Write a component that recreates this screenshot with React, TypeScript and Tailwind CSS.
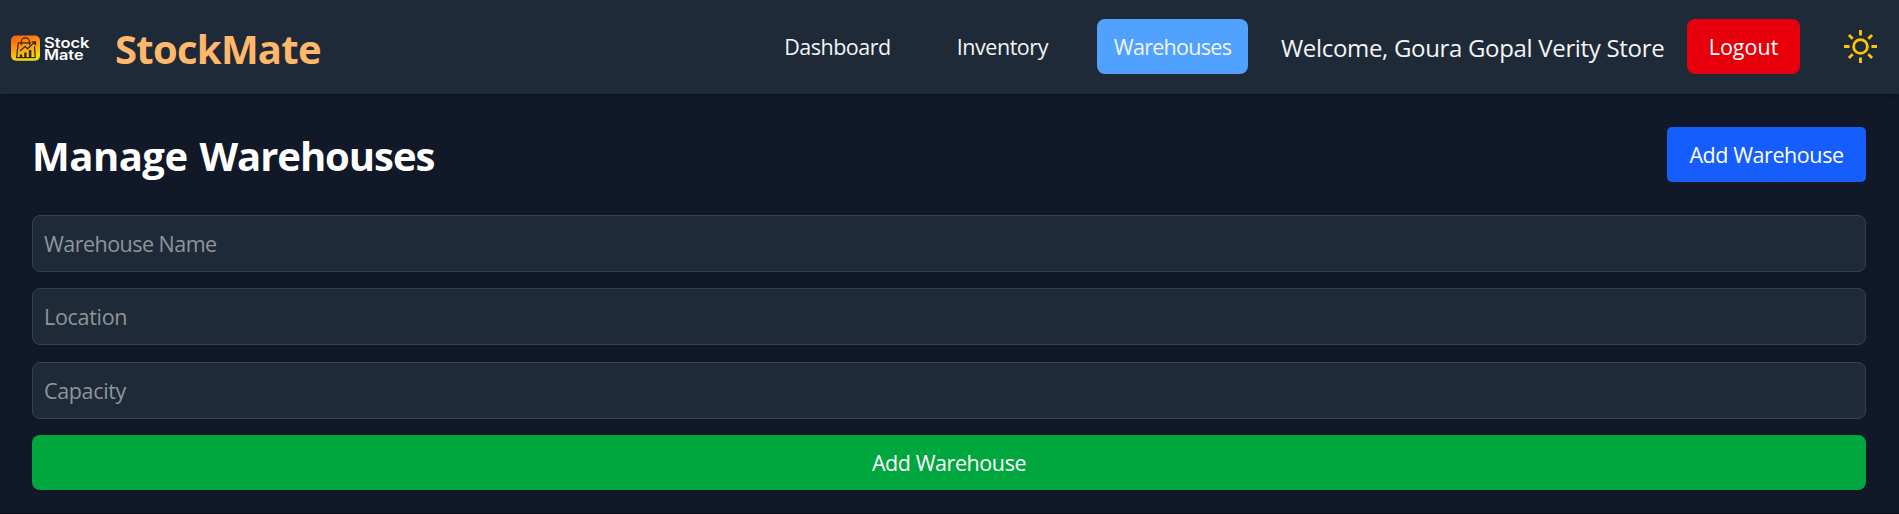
function Logo() {
  return (
    <svg width="82" height="31" viewBox="0 0 82 31" aria-label="Stock Mate">
      <defs>
        <linearGradient id="tile" x1="0" y1="0" x2="0.35" y2="1">
          <stop offset="0" stopColor="#ff5a0a" />
          <stop offset="0.5" stopColor="#ff9410" />
          <stop offset="1" stopColor="#f6dc0c" />
        </linearGradient>
      </defs>
      <rect x="1" y="4.5" width="29" height="25.3" rx="5" fill="url(#tile)" />
      <g transform="translate(0 2)">
        <g fill="none" stroke="#3a2a1c" strokeWidth="1.3" strokeLinecap="round" strokeLinejoin="round">
          <path d="M20.5 9.8H8.3L6.6 24.6H25.2L24.6 14" />
          <path d="M11.3 11.5V9a4.1 4.1 0 0 1 8.2 0V11.5" />
          <path d="M10.5 17.5l4.6-4 2.5 2.2 6.2-6" />
        </g>
        <path d="M21.3 8.2h4.8v4.8z" fill="#3a2a1c" />
        <path d="M9.8 21.6h2.4v3H9.8zM14.2 19.6h2.4v5h-2.4zM18.8 17h2.6v7.6h-2.6z" fill="#3a2a1c" />
      </g>
      <g fill="#ffffff" className="font-['Inter',sans-serif] text-[14.2px] font-semibold">
        <text x="34" y="16.6" textLength="45.5" lengthAdjust="spacingAndGlyphs">Stock</text>
        <text x="34" y="29" textLength="39.5" lengthAdjust="spacingAndGlyphs">Mate</text>
      </g>
    </svg>
  );
}

function SunIcon() {
  return (
    <svg width="33" height="33" viewBox="0 0 33 33" fill="none" stroke="#fdc700" strokeWidth="2.8">
      <circle cx="16.5" cy="16.5" r="6.9" />
      <path d="M16.5 0v5.5M16.5 27.5V33M0 16.5h5.5M27.5 16.5H33M4.9 4.9l3.8 3.8M24.3 24.3l3.8 3.8M4.9 28.1l3.8-3.8M24.3 8.7l3.8-3.8" />
    </svg>
  );
}

const fields = [
  { label: "Warehouse Name", spacing: "placeholder:tracking-[-0.53px]", gap: "mb-4" },
  { label: "Location", spacing: "placeholder:tracking-[-0.3px]", gap: "mb-[17px]" },
  { label: "Capacity", spacing: "placeholder:tracking-[-0.34px]", gap: "mb-4" },
];

export default function App() {
  return (
    <div className="h-[514px] overflow-hidden border-b border-[#080b16] bg-[#111827] font-['Open_Sans',sans-serif] text-[21.5px] leading-[33px] text-white">
      <header className="flex h-[94px] items-center bg-[#1f2a38] pl-[10px] pr-[22px] pb-px shadow-md">
        <Logo />
        <span className="ml-[23px] pt-[5px] text-[40px] leading-[50px] font-bold tracking-[-0.73px] text-[#ffb86a]">StockMate</span>
        <nav className="ml-auto flex items-center text-gray-100">
          <a className="mr-[66px] tracking-[-0.5px]">Dashboard</a>
          <a className="mr-[49px] tracking-[-0.45px]">Inventory</a>
          <a className="flex h-[55px] w-[151px] items-center justify-center rounded-lg bg-[#51a2ff] tracking-[-0.7px]">Warehouses</a>
        </nav>
        <span className="ml-[33px] w-[384px] whitespace-nowrap pt-[2px] text-[24px] tracking-[-0.32px] text-gray-100">
          Welcome, Goura Gopal Verity Store
        </span>
        <button className="ml-[22px] h-[55px] w-[113px] rounded-lg bg-[#e7000b]">Logout</button>
        <button className="ml-[44px]" aria-label="Toggle theme"><SunIcon /></button>
      </header>
      <main className="px-8 pt-[33px] pr-[33px]">
        <div className="mb-[33px] flex h-[55px] items-center justify-between">
          <h1 className="pt-[3px] text-[40px] leading-[50px] font-bold tracking-[-0.5px]">
            Manage <span className="ml-[2px] tracking-[-1.05px]">Warehouses</span>
          </h1>
          <button className="h-[55px] w-[199px] rounded-[5px] bg-[#155dfc] tracking-[-0.43px]">Add Warehouse</button>
        </div>
        <form className="flex flex-col">
          {fields.map((f) => (
            <input
              key={f.label}
              placeholder={f.label}
              className={`h-[57px] rounded-lg border border-[#364153] bg-[#1f2a38] px-[11px] placeholder:text-[#8f9499] ${f.spacing} ${f.gap}`}
            />
          ))}
          <button type="button" className="h-[55px] rounded-lg bg-[#00a63e] tracking-[-0.43px]">Add Warehouse</button>
        </form>
      </main>
    </div>
  );
}
